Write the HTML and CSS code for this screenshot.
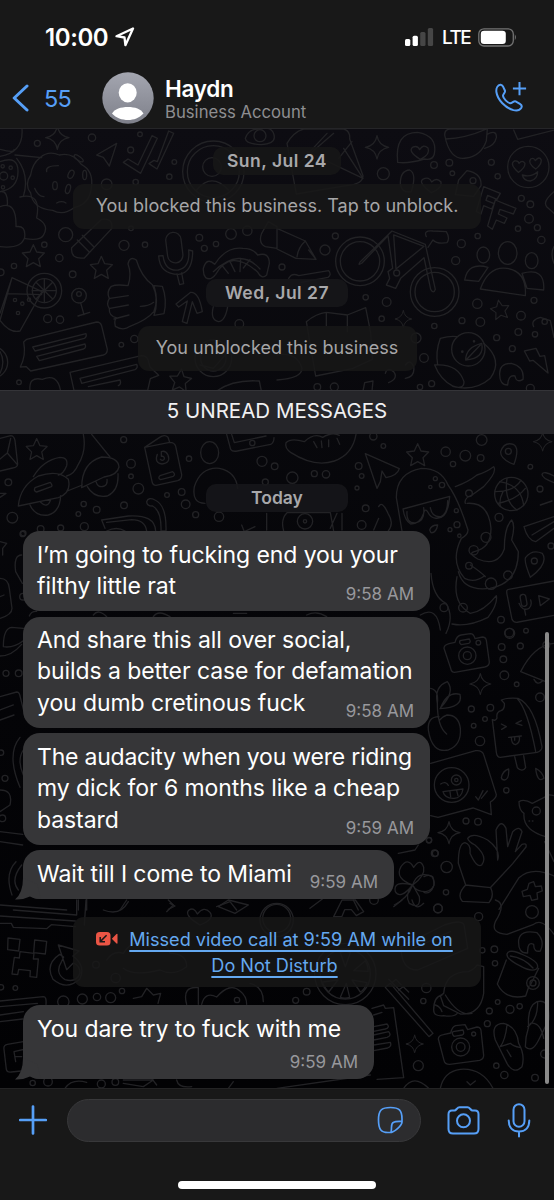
FILE: index.html
```html
<!DOCTYPE html>
<html lang="en">
<head>
<meta charset="utf-8">
<title>Chat</title>
<link rel="stylesheet" href="styles.css">
</head>
<body>
<div class="phone">
  <header class="top">
    <div class="status">
      <span class="clock">10:00</span>
      <svg class="loc" width="20" height="20" viewBox="0 0 20 20"><path d="M18 1.5 1.5 9.2l8 1.3.9 7.7z" fill="none" stroke="#fff" stroke-width="2.3" stroke-linejoin="round"/></svg>
      <svg class="signal" width="29" height="19" viewBox="0 0 29 19"><rect x="0" y="11" width="5.3" height="7" rx="1.5" fill="#fff"/><rect x="7.6" y="7.8" width="5.3" height="10.2" rx="1.5" fill="#fff"/><rect x="15.2" y="4" width="5.3" height="14" rx="1.5" fill="#464646"/><rect x="22.8" y="0" width="5.3" height="18" rx="1.5" fill="#464646"/></svg>
      <span class="net">LTE</span>
      <svg class="battery" width="40" height="19" viewBox="0 0 40 19"><rect x=".8" y=".8" width="34.5" height="17.2" rx="5.2" fill="none" stroke="#737373" stroke-width="1.3"/><rect x="2.8" y="2.8" width="25" height="13.2" rx="3.3" fill="#fff"/><path d="M36.8 6.3q2.200 3 0 6z" fill="#737373"/></svg>
    </div>
    <div class="nav">
      <svg class="back" width="18" height="28" viewBox="0 0 18 28"><path d="M15 2 2.2 14 15 26" fill="none" stroke="#569ff7" stroke-width="3" stroke-linecap="round" stroke-linejoin="round"/></svg>
      <span class="count">55</span>
      <svg class="avatar" width="52" height="52" viewBox="0 0 52 52"><defs><linearGradient id="av" x2="0" y2="1"><stop stop-color="#a4a6b0"/><stop offset="1" stop-color="#7e808a"/></linearGradient></defs><circle cx="26" cy="26" r="25.700" fill="url(#av)"/><ellipse cx="25.700" cy="20.800" rx="9" ry="9.600" fill="#fff"/><path d="M10 41.500c2.500-4.500 9-6.500 16-6.500s13 2 15.500 6.500C37 46 32 48 26 48s-12-2-16-6.500z" fill="#fff"/></svg>
      <div class="who"><div class="name">Haydn</div><div class="sub">Business Account</div></div>
      <svg class="call" width="33" height="33" viewBox="0 0 33 33"><g fill="none" stroke="#569ff7" stroke-width="2"><path d="M25.500 1v13.200M18.900 7.600h13.200"/><path stroke-linejoin="round" d="M2.400 11c-.5-4 1.500-6.800 4-7.200 1.300-.2 2.100.7 2.800 2l1.700 3.700c.9 2-2 3.300-1.900 5.400.2 2.600 4.500 7 7.200 7.300 2.100.1 3.500-2.600 5.400-1.800l4.300 2.400c2.200 1.300 2.300 2.500 1.300 4.200-1.500 2.300-4.300 3-7.800 2.100C11.600 26.900 3.500 19 2.400 11z"/></g></svg>
    </div>
  </header>

  <main class="chat">
    <svg class="wallpaper" width="554" height="959" viewBox="0 129 554 959" preserveAspectRatio="none">
      <defs>
        <path id="star" d="M0-33 10-11 33-8 16 9 21 33 0 21-21 33-16 9-33-8-10-11z"/>
        <path id="spark" d="M0-35Q5-5 35 0Q5 5 0 35Q-5 5-35 0Q-5-5 0-35z"/>
      </defs>
      <g class="doodle">
        <g transform="translate(0 125) scale(.33333)">
          <use href="#spark" x="172" y="38"/><circle cx="276" cy="38" r="11"/><circle cx="112" cy="55" r="9"/><circle cx="420" cy="28" r="7"/><circle cx="392" cy="75" r="9"/><circle cx="523" cy="111" r="7"/><circle cx="508" cy="155" r="8"/><circle cx="407" cy="171" r="8"/><circle cx="320" cy="178" r="16"/>
          <path d="M66 12q5 70-66 82M0 73q45 12 42 0M0 110q55-20 54 30 0 50-54 60M45 90l80 8M50 100q40 50 20 115"/>
          <circle cx="11" cy="153" r="12"/><circle cx="8" cy="124" r="5"/><circle cx="32" cy="128" r="5"/><circle cx="38" cy="158" r="5"/><circle cx="9" cy="187" r="5"/>
          <path d="M0 245q50-20 48 60 30-5 26 32-10 35-74 28M60 216q65-15 50 63 40 20 20 52-10 17-54 10M0 200q25-5 22 42"/>
          <path d="M120 98q25-22 58-8 40-10 66 28 38 20 30 70-5 50-52 60-32 25-64 8-60-5-66-52-20-25 0-54 5-35 28-52z"/>
          <path d="M140 140q-5-18 35-18M104 190q10 25 28 25M170 234q15-8 28 0"/><ellipse cx="213" cy="148" rx="8" ry="13" transform="rotate(25 213 148)"/><ellipse cx="165" cy="182" rx="7" ry="12"/><ellipse cx="204" cy="192" rx="7" ry="14" transform="rotate(15 204 192)"/><ellipse cx="254" cy="150" rx="6" ry="14"/><ellipse cx="236" cy="100" rx="16" ry="6" transform="rotate(35 236 100)"/>
          <path d="M290 90l60-35-22 68-18-26z"/><path d="M370 112l14-10 30 18 42-88 16 8-50 105zM447 116l15-10 10 4 34-92 15 7-50 107z"/>
          <circle cx="640" cy="140" r="92"/><circle cx="640" cy="140" r="78"/><circle cx="636" cy="126" r="28"/><path d="M590 195q45-55 95 0"/><path d="M736 40q10-30 45-28 40-10 42 25 0 20-40 22-45-2-47-19z"/><circle cx="780" cy="32" r="18"/>
          <path d="M215 368l90-85q35-5 30 28l-82 88q-42 5-38-31zM232 345l35 35M247 331l35 35"/>
          <circle cx="197" cy="329" r="21"/><circle cx="372" cy="361" r="15"/><circle cx="435" cy="359" r="8"/><circle cx="133" cy="359" r="8"/><circle cx="178" cy="399" r="11"/><circle cx="218" cy="448" r="10"/><circle cx="42" cy="423" r="8"/><circle cx="2" cy="442" r="10"/><circle cx="598" cy="338" r="10"/><circle cx="613" cy="370" r="9"/><circle cx="648" cy="357" r="8"/><circle cx="693" cy="327" r="16"/><circle cx="742" cy="317" r="14"/><circle cx="393" cy="310" r="7"/>
          <use href="#star" x="100" y="392"/><use href="#star" x="304" y="427"/>
          <rect x="500" y="322" width="46" height="92" rx="23" transform="rotate(-7 523 368)"/><path d="M476 393q3 55 60 55 42-5 42-70l-12-3q5 53-31 60-40 5-46-43zM531 447l8 32 12-3-6-32"/>
          <path d="M610 430q10-35 34-12 35-55 85-48 30 0 44 20 35-10 35 25l-8 35q-15 15-28-10-80-70-125 8-15 20-30 10-8-10-7-28zM640 440q80-75 140-8M665 420l20 25M690 410l15 30M722 400l-2 40M750 404l-20 25"/>
          <path d="M36 458l90 42-66 118q-30 8-60-32zM20 506l105 3M0 565l36-107"/><circle cx="133" cy="497" r="52"/><circle cx="133" cy="497" r="36"/><path d="M133 461v72M97 497h72M108 472l50 50M158 472l-50 50"/><circle cx="45" cy="525" r="5"/><circle cx="67" cy="536" r="5"/><circle cx="87" cy="524" r="5"/><circle cx="54" cy="564" r="5"/>
          <circle cx="237" cy="512" r="22"/><circle cx="237" cy="507" r="7"/><path d="M242 534l10 35M234 573l35-11"/><circle cx="143" cy="581" r="12"/><circle cx="180" cy="584" r="11"/>
          <path d="M384 482q12-35 0-65 5-25 25-12 15 50 48 74 20 40 5 80-20 25-72 45-20 15-44 0-5-20 5-25-25-5-23-28-10-15 0-30-10-20 6-37 15-7 50-2zM330 520l55-8M330 550l55-10M342 582l45-12M421 544q25 0 40-12M462 482l25 2q15 40 5 82l-30 5q15-40 0-89z"/>
          <path d="M528 537l44-35q25-2 35 58l-16 5-14-35-16 65-14-5 15-62-26 18zM640 545q-10 40 15 45 20 0 28-45"/><circle cx="718" cy="597" r="13"/><circle cx="403" cy="642" r="11"/><circle cx="364" cy="659" r="7"/><circle cx="57" cy="772" r="7"/>
          <path d="M80 643l210-52q12 0 15 12l17 70q0 14-12 17L92 738l-13-13-18 1q18-35 10-75zM98 666l160-40q3 10-5 14l-148 38zM110 694l145-37q5 12-5 15l-132 35z"/>
          <path d="M210 742l214-50q15 0 20 12l6 22 26 25-25 10-8 35H222zM240 760l170-42q5 10-5 16l-160 41zM265 785l95-20q5 12-5 17M90 798q-5-45 37-35 45-20 55 35"/><circle cx="-25" cy="712" r="48"/><path d="M0 680q17 30 0 65"/>
          <use href="#star" x="541" y="765" transform="rotate(6 541 765)"/><circle cx="640" cy="700" r="55"/><circle cx="640" cy="700" r="38"/><path d="M600 720l40 10 40-45M650 798q50-35 128-30l6 30M785 325l20-35 26 15v65l-35-5q-22-10-11-40"/>
        </g>
        <g transform="translate(277 125) scale(.33333)">
          <path d="M30 55q20-35 50-43h120q20 5 18 30l40 110q0 25-50 30l-150 25zM60 120L170 25M200 70L258 160 90 80M80 100l70-75M225 50l-40 50"/><use href="#spark" x="300" y="67"/><circle cx="319" cy="146" r="18"/><path d="M362 112q-10-90 60-90 60 10 50 65-5 20-30 15-50 15-80 10zM430 103q-40-25-22-37 15-5 20 8 10-18 25-5 8 20-23 34z"/>
          <path d="M503 30q0-18 18-18h110l-3 35q-15 45-60 52-50 10-65-69zM506 42q60-2 123-30M630 28q30-15 28 10-5 25-35 32M710 15l12 28 110-28"/><circle cx="754" cy="126" r="62"/><path d="M724 142q-28-25-12-34 12-2 14 7 10-12 18 0 0 15-20 27zM776 132q-25-18-15-30 10-5 14 5 12-15 18-2 0 15-17 27zM736 150q25 8 46-10 0 22-22 28-20 0-24-18z"/>
          <circle cx="471" cy="120" r="10"/><circle cx="517" cy="113" r="10"/><circle cx="526" cy="145" r="7"/><circle cx="643" cy="112" r="9"/><circle cx="662" cy="154" r="8"/><path d="M370 175q0-38 28-40 22 10 5 65-30 5-33-25zM463 203q-40-30-26-40 20-10 27 8 15-15 28 0 5 18-29 32z"/><path d="M545 165l25-28q45 8 42 45l-22 32-55-5zM620 185l50 20-10 18-28-12-5 15 25 10-8 16-24-10-8 25-14-8zM655 225l62 25-8 17-40-14-5 14 26 12-8 16-24-10-12 28-14-10z"/><circle cx="588" cy="167" r="9"/>
          <circle cx="733" cy="220" r="9"/><circle cx="760" cy="238" r="10"/><circle cx="756" cy="281" r="13"/><circle cx="723" cy="311" r="8"/><circle cx="781" cy="308" r="9"/><circle cx="793" cy="345" r="11"/><circle cx="602" cy="333" r="8"/><circle cx="553" cy="356" r="12"/><circle cx="536" cy="407" r="12"/><circle cx="175" cy="333" r="9"/><circle cx="144" cy="375" r="15"/><circle cx="15" cy="426" r="9"/>
          <path d="M831 200q-35 30-22 45l22 20M831 365q-12 20 0 50"/><path d="M0 310l85 38 32 55-60-3L0 372M85 348q-22 20-25 48M117 403l-22-28"/>
          <circle cx="249" cy="409" r="73"/><circle cx="249" cy="409" r="59"/><circle cx="473" cy="501" r="73"/><circle cx="473" cy="501" r="59"/><path d="M250 410l95-92 100 40 30 135q-5 15-14 0l-20-95-70 62-15 30-28-10 10-20-5-20 14-10-14-98-78 82q-15 10-5-4zM350 330l7 102 84-68zM448 335q-10-20 20-17l40 2q12 20 2 33-30 5-42-8l-15 22"/><circle cx="359" cy="444" r="9"/>
          <ellipse cx="692" cy="384" rx="28" ry="34"/><ellipse cx="619" cy="390" rx="19" ry="24"/><ellipse cx="764" cy="407" rx="19" ry="24"/><path d="M610 492q25-70 80-62 60 10 55 82zM563 465q10-55 70-38l-28 42zM735 445q70-20 65 50l-50-5z"/><path d="M35 460q10-18 30-8l90-15q10 12-2 20l-80 15"/>
          <use href="#star" transform="translate(669 553) rotate(-10) scale(.85)"/><circle cx="601" cy="536" r="14"/><circle cx="771" cy="526" r="9"/><circle cx="732" cy="572" r="13"/><circle cx="610" cy="591" r="13"/><circle cx="555" cy="587" r="9"/><circle cx="472" cy="603" r="8"/><circle cx="724" cy="621" r="10"/><circle cx="659" cy="638" r="9"/><circle cx="706" cy="671" r="9"/><circle cx="441" cy="699" r="13"/><circle cx="329" cy="531" r="13"/><circle cx="266" cy="517" r="8"/><circle cx="314" cy="581" r="8"/><circle cx="417" cy="639" r="15"/><circle cx="464" cy="776" r="9"/><circle cx="429" cy="786" r="8"/><circle cx="172" cy="786" r="12"/><circle cx="121" cy="786" r="10"/>
          <use href="#spark" transform="translate(379 582) scale(.72)"/><path d="M88 590q30-25 60-28l63 8 55-22 15 75 5 80-60 28-110 22zM148 562v40M211 570v50"/>
          <circle cx="574" cy="673" r="50"/><path d="M490 640q30-8 50-5M490 640q-15 40-8 80M620 655q60 50 20 105-45 40-110 25-40-20-57-65 70-5 88 50 0 25-35 13M566 705q0-38 48-50 10 45-48 50zM570 702l40-42"/><circle cx="591" cy="649" r="2"/><circle cx="556" cy="680" r="2"/>
          <path d="M742 678l35-8 12 24 14-2 10 52-45-38-10 2zM770 605q-10-20 20-28l30 10 11 50M668 745q0-30 35-30 40 10 35 48-20 12-24-10-20-5-22 27-25 0-24-35zM325 745q5-20 25-5 15 20-15 33M385 720q15-20 25 5 5 30-25 35M258 798l5-25 25-5-3 30M0 690q60-10 75 40 0 30-75 35"/><circle cx="760" cy="790" r="12"/><circle cx="803" cy="590" r="8"/><circle cx="774" cy="628" r="8"/>
        </g>
        <g transform="translate(0 385) scale(.33333)">
          <use href="#star" transform="translate(110 192) scale(.95)"/><path d="M0 160l32-8q10 0 13 15l8 70q0 10-15 12L0 258M0 222l22-18 30 35M32 160L22 204M250 148q10 50-15 90-12 30-35 35M275 148l55 68"/>
          <path d="M55 363q5-60 60-90 60-20 90 10 10 40-30 55zM100 275q30-50 80-58 25 0 20 25-10 25-25 28M105 308l46-16q8 10 3 13l-44 16q-10-2-5-13zM90 360q15 35 55 30 35-10 37-58M122 352q20 20 30-8M202 318l45-18M245 308q0-75 60-92 50 0 52 30-5 25-45 30zM262 305q20 35 60 28 35-15 32-67M288 290q5 20 25 13 10-5 8-20"/>
          <circle cx="371" cy="164" r="9"/><circle cx="393" cy="236" r="13"/><circle cx="393" cy="274" r="7"/><circle cx="415" cy="311" r="16"/><circle cx="25" cy="292" r="10"/><circle cx="37" cy="398" r="16"/><circle cx="251" cy="357" r="8"/><circle cx="235" cy="387" r="7"/><circle cx="290" cy="374" r="10"/><circle cx="372" cy="361" r="10"/><circle cx="253" cy="425" r="12"/><circle cx="182" cy="429" r="9"/><circle cx="122" cy="432" r="10"/><circle cx="70" cy="445" r="8"/><circle cx="501" cy="330" r="7"/><circle cx="545" cy="321" r="10"/><circle cx="557" cy="358" r="13"/><circle cx="587" cy="389" r="9"/><circle cx="657" cy="395" r="14"/><circle cx="567" cy="221" r="8"/><circle cx="786" cy="229" r="15"/><circle cx="824" cy="244" r="10"/><circle cx="796" cy="291" r="9"/>
          <path d="M434 187l45-30q15-10 25 0l5 15M434 187l75-15q15 0 18 12l18 85q0 14-12 18l-65 14q-10 0-12-12zM480 272l38-12q10 8 2 14l-38 10q-10-5-2-12z"/><path d="M472 208q-10 25 14 29 27-3 18-27-8-15-20-10v14q10-2 9 8-5 8-12 1"/><ellipse cx="629" cy="203" rx="27" ry="33"/><path d="M615 355q-40 0-32-50 20-60 75-55 50 10 55 60M680 148l12 45q5 8 20 5l100-20q10-5 10-20M695 148l8 25 95-20"/><circle cx="757" cy="174" r="8"/>
          <path d="M440 350q5-15 25-5 35 15 33 93h-15q2-60-25-75-18 0-18-13zM305 405l80-12q80-5 82 45M305 405l10 25M320 412l75-8q40 0 45 34M320 438q30-15 55 0M725 420l8 20 32-15M800 385v50M0 325h18l-18 12"/>
        </g>
        <g transform="translate(277 385) scale(.33333)">
          <path d="M237 148q-10 60-65 80-60 20-130-25-20-15-15-30 15-15 55-3 30-28 55-13 30-18 50-6M110 170l10 18M133 168l2 20M155 165v20M180 160l8 18"/><path d="M265 206l102 45q-5 20-40 27l-12-20-5 32-10 20z"/><use href="#star" x="422" y="209"/><circle cx="506" cy="200" r="14"/><circle cx="565" cy="212" r="16"/><circle cx="611" cy="219" r="10"/><circle cx="528" cy="237" r="8"/><circle cx="614" cy="165" r="16"/><circle cx="289" cy="154" r="11"/><circle cx="319" cy="183" r="7"/><circle cx="245" cy="243" r="10"/><circle cx="254" cy="273" r="7"/><circle cx="240" cy="309" r="6"/><circle cx="46" cy="278" r="17"/><circle cx="112" cy="266" r="9"/><circle cx="147" cy="268" r="11"/><circle cx="760" cy="245" r="7"/><circle cx="789" cy="312" r="9"/><circle cx="266" cy="370" r="10"/><circle cx="254" cy="420" r="13"/><circle cx="666" cy="397" r="12"/><circle cx="822" cy="483" r="9"/><circle cx="672" cy="704" r="10"/><circle cx="697" cy="743" r="13"/>
          <path d="M711 238q-42-15-40-38 10-30 38-22 20 10 2 60z"/><circle cx="694" cy="199" r="9"/><use href="#spark" transform="translate(797 170) scale(.8)"/><circle cx="703" cy="327" r="50"/><path d="M668 290q65 10 72 72M655 320q55 0 77-34M662 355q55-10 83-45M690 280q-10 70 30 95M670 365q-5-20 8-45"/>
          <path d="M375 438q-10-60-17-100 0-75 75-88 60 0 80 50 30 40 60 135 0 15-20 25-35 70 10 120 30 15 60-8M378 372l140-38q-5 65-35 65-20 5-32-20-8-10-12 8-10 30-38 30-18-10-23-45zM390 380q-3 35 25 34 30-5 25-46M460 368q5 30 32 27 20-10 20-48M535 305q40-15 65-35 30-10 50-25 12 15-30 60l-35 25q-25 10-20 25M570 355q65-5 72 75 0 60-50 70-20 5 10 22 60 25 80-30 0-65 22-87 12 15 0 60l20 35q0 95-85 110-80 10-95-50M580 540q30 20 45 35M540 575q-15 80 40 110 40-5 78-53 5 25-25 65-60 30-108 20M462 565q5 70 45 90 25 40 0 90M430 690q50-30 60 45"/>
          <circle cx="475" cy="281" r="6"/><circle cx="495" cy="300" r="8"/><circle cx="460" cy="306" r="5"/><circle cx="538" cy="377" r="6"/><circle cx="540" cy="419" r="9"/><circle cx="519" cy="434" r="6"/><circle cx="547" cy="452" r="5"/><circle cx="576" cy="325" r="10"/><circle cx="627" cy="457" r="15"/><circle cx="590" cy="496" r="14"/><circle cx="576" cy="542" r="10"/><circle cx="642" cy="596" r="17"/><circle cx="693" cy="571" r="13"/><circle cx="558" cy="668" r="13"/><circle cx="501" cy="668" r="12"/><path d="M458 435q5-15 24-15-5 25-20 23zM305 365q10-20 28 20 20 30 0 54M290 435l15-35M20 438q-10-35 10-55h130l10 55M180 385l-20 45M195 385v50"/><circle cx="84" cy="409" r="23"/><circle cx="84" cy="409" r="5"/>
          <path d="M831 395l-90 30q10 40 35 45l55-40M790 360l35-12M765 450l66-40M795 268q5-12 36 5M795 268q0 12 36 25M760 577q-20-50-14-60 20-25 50-12 20 30-36 72z"/><circle cx="772" cy="528" r="9"/><path d="M695 613l136-25M695 613q-8 0-5 15l15 75q5 12 20 8l106-20M726 655q10 25 30 15 10-10 5-25M743 675l3 15M785 632l5 30 27-20z"/><rect x="731" y="628" width="17" height="36" rx="8" transform="rotate(-10 740 645)"/>
        </g>
        <g transform="translate(0 530) scale(.33333)">
          <path d="M0 35l20 5-12 15 0 20M65 75q-25 0-18 50l20 35M0 145q25 0 28 30l8 60q0 20-36 30M0 200l12-5M10 350q0-55 25-58l35 3M10 350q30 5 60-18M0 378q35 0 65-35M0 500l50-14q8 0 10 12l10 40M0 540l40-15M0 570l42-15"/><circle cx="18" cy="430" r="9"/><circle cx="56" cy="430" r="10"/><circle cx="68" cy="12" r="8"/><circle cx="69" cy="200" r="10"/><path d="M88 258q5-15 22-14M280 255q15-20 40 5M460 260q15-22 50 0M700 250h40M920 255q30-15 60 5"/>
        </g>
        <g transform="translate(0 730) scale(.33333)">
          <path d="M60 22q-42 50 0 150M70 60q-20 30 0 75M0 180q40 0 30 45l-30 20M0 305l68 8M0 335l68 10M48 395q-35 35-12 100M65 405q-35 45-10 75M0 525l200 15M235 540v-30M260 540v-32M380 510l-20 30M510 520l15 8-20 10"/><circle cx="15" cy="145" r="9"/><circle cx="7" cy="265" r="10"/><circle cx="3" cy="68" r="8"/>
          <path d="M1238 465q-55-20-35-55 20-30 38 2 20-30 30 0 5 25-33 53zM1238 465q15-45 60-25 15 35-20 45-30 0-40-20zM1238 465q-60-15-52 20 15 25 52-20zM1238 465q-25 30-10 55 35 20 30-20zM1238 465q-15 40-55 60"/><circle cx="1287" cy="330" r="8"/><circle cx="1304" cy="370" r="10"/><circle cx="830" cy="565" r="42"/><path d="M650 530l40-15 20 25M930 535l40-30M1060 510l15 30M1195 370l50-10 10-15"/>
        </g>
        <g transform="translate(0 900) scale(.33333)">
          <path d="M0 70h34l6 12 100 4 14-12 72 6M0 48l226 15M230 0v45L40 30M258 0l-5 75M24 114l36 4-4 35-33-4zM104 120l36 4-4 38-35-4zM60 155l42 5-2 17h15l-5 55-20-2 1-18-35-4-3 16-17-2 7-50 15 2z"/><path d="M175 135l62 18-18 15q40 30 20 70-40 35-80 0-25-45 20-75l12 8-6 13q-22 35 10 55 35 10 45-20 0-22-20-30l-20 20zM0 303l130-13q10 0 8 23M0 320l112-10M0 345l70-10M0 365l68-8M70 425l-48 8q-12 2-10 15l7 60q2 10 15 8l30-3M42 455l35-8M42 455l5 30M45 470h20"/>
          <circle cx="190" cy="305" r="17"/><circle cx="247" cy="297" r="15"/><circle cx="291" cy="291" r="11"/><circle cx="332" cy="293" r="15"/><circle cx="366" cy="273" r="8"/><circle cx="46" cy="264" r="7"/><circle cx="3" cy="262" r="8"/><circle cx="288" cy="194" r="10"/><circle cx="347" cy="234" r="14"/><circle cx="98" cy="549" r="8"/><circle cx="144" cy="545" r="13"/><circle cx="304" cy="552" r="12"/><circle cx="346" cy="546" r="10"/>
          <path d="M310 30q50 20 75-25M505 0l15 15-20 20M600 75q-50-30-33-45 15-10 25 12 20-25 38-5 15 20-30 38zM655 20l30-20 60 15-40 25zM320 180q20-30 50-20 30-50 75-20 50-30 65 20 50 0 50 40-40 30-80 10-80 20-110-5M400 295l25-5 15-25 20 20 22-5-8 30M560 313q-15-55 35-50v50M605 313q10-40 45-22 40-45 70-18 20 15 20 40M750 250q40 10 40 55M470 555l-15-20M370 540h90l-30 20-60-10M530 540q5 25 45 20M700 545l-15 20M195 565q20-30 65-18"/><circle cx="711" cy="300" r="8"/><circle cx="830" cy="60" r="50"/>
        </g>
        <g transform="translate(277 900) scale(.33333)">
          <path d="M170 50l25-50h40l25 35-22 12-15-18h-20l-8 20zM350 20l25-20M405 0q10 35 35 10"/><circle cx="483" cy="26" r="13"/><circle cx="605" cy="50" r="12"/><circle cx="765" cy="36" r="19"/><circle cx="291" cy="0" r="13"/><circle cx="205" cy="222" r="92"/><circle cx="205" cy="222" r="75"/><path d="M205 200l-15-42q15-10 30 0zM230 212l35-30q10 20 8 32zM225 240l45 8q-8 22-20 28zM208 250l10 42q-15 5-28 0zM183 240l-28 36q-18-20-18-30zM180 215l-44 2q5-25 14-32z"/>
          <path d="M372 140l130-65q60-20 60 5l10 65-150 65q-50 0-50-70zM400 150l120-55M655 0q35 10 0 65-15 35 35 38l80-30q25-20 61 30M725 120q5-32 55-22 25 25 10 55-20 5-20-20-20-10-18 26-30 2-27-39z"/>
          <path d="M690 162q5-18 50 3 55 25 38 42-15 10-50-10-40-20-38-35zM688 180l-27 72q25 50 85 36l10-30M785 205l-25 50M700 168q40 5 68 36"/><circle cx="768" cy="249" r="19"/><circle cx="768" cy="249" r="9"/>
          <path d="M500 280q5-65 75-65 20-10 25-20l20 5v80q-10 65-70 62l-50-25-10-30zM505 285q40 65 80 55M495 285q-25 5-25 45 0 20 30 17 30 5 40-6M475 315q15 5 20 20"/><path d="M325 262l15-12 128 150-12 10zM335 238l60 60M345 248l12-10 15 16M365 270l14-10 16 16"/>
          <path d="M285 325l35-10 5 10 25-2 30 210-80 5M290 345l25-8M290 380l40-8q10 10-5 15l-35 7M290 405l45-10q10 12-5 17l-40 8M290 435l50-8q5 12-8 17l-42 8M0 565l280-40"/><use href="#spark" transform="translate(413 432) scale(.75)"/><circle cx="424" cy="497" r="15"/><circle cx="448" cy="264" r="14"/><circle cx="439" cy="303" r="8"/><circle cx="89" cy="275" r="10"/><circle cx="56" cy="301" r="9"/><circle cx="652" cy="148" r="10"/><circle cx="654" cy="190" r="8"/><circle cx="616" cy="151" r="8"/><circle cx="637" cy="333" r="9"/><circle cx="662" cy="306" r="7"/><circle cx="699" cy="328" r="12"/><circle cx="728" cy="319" r="8"/><circle cx="631" cy="371" r="9"/><circle cx="658" cy="497" r="8"/><circle cx="682" cy="525" r="11"/><circle cx="774" cy="533" r="10"/><circle cx="803" cy="462" r="12"/>
          <path d="M484 417q0-10 15-13l22-5q5-20 15-22l28-3 8 15 28-8q10 0 12 10l8 75q0 12-12 15l-90 12q-15 0-17-12zM528 395l30-5q5 12-2 15l-25 4q-8-8-3-14z"/><circle cx="551" cy="441" r="27"/><circle cx="551" cy="441" r="13"/><circle cx="590" cy="402" r="6"/><path d="M655 420q-15-50 25-50 40 10 45 60 20 35 10 70-25 25-45-10zM670 440q15-20 20-65M670 440l30-10q10 10 28 12M690 450l12 20M745 440q0-30 10-60-5-60 25-75 40-10 35 55l-30 60q-20 40-40 20zM752 380q30-20 30-75M760 370q30-5 40 45M490 565q10-50 60-57 65-5 98 57M570 545l10 10 15-12M380 565q30-45 75 0"/>
        </g>
        <g transform="translate(424 620) scale(.33333)">
          <path d="M60 85q0-10 15-14l18-4q5-20 18-22l28-4q10 0 14 15l22-5q10 0 12 10l9 65q0 12-14 15l-90 16q-10 0-12-12zM108 62l28-5q6 10-2 13l-22 4q-8-5-4-12z"/><circle cx="130" cy="107" r="26"/><circle cx="130" cy="107" r="12"/><circle cx="163" cy="68" r="7"/><use href="#spark" transform="translate(169 192) scale(.9)"/>
          <circle cx="257" cy="40" r="15"/><circle cx="306" cy="32" r="7"/><circle cx="233" cy="81" r="10"/><circle cx="289" cy="78" r="9"/><circle cx="238" cy="118" r="10"/><circle cx="241" cy="166" r="13"/><circle cx="278" cy="193" r="7"/><circle cx="199" cy="263" r="10"/><circle cx="142" cy="267" r="9"/><circle cx="183" cy="297" r="7"/><circle cx="149" cy="317" r="7"/><circle cx="168" cy="363" r="14"/><circle cx="348" cy="232" r="13"/><circle cx="247" cy="511" r="8"/><circle cx="126" cy="603" r="9"/><circle cx="162" cy="605" r="10"/><circle cx="68" cy="741" r="17"/><circle cx="34" cy="700" r="9"/><circle cx="66" cy="817" r="8"/><circle cx="15" cy="661" r="8"/>
          <path d="M20 205q25 5 20 45-10-50 30-65 25 30-20 78 20-50 58-40 10 40-60 43M40 250q0 70 28 92M45 290q-35 0-32 40 10 70 60 60 40-15 36-65-5-40-40-40-15 5-22 15"/>
          <path d="M232 240q20-8 50-5 50 20 72 145 0 12-15 17l-110 15q-10 0-12-15l-12-98q10 5 14-5-3-18 12-22 12-5 10-22zM280 236q30 30 55 158M272 410l8 33q15 15 25 0l-6-36M232 312l15 8-14 8M292 302l-16 8 18 6M254 352l38-4M262 352q0 20 12 22 15-5 12-24M272 351v10"/>
          <path d="M20 430l135-38q20-2 24 12l38 120q0 10-18 22l3 38-55-20-105 28-22-5"/><circle cx="83" cy="495" r="52"/><circle cx="97" cy="480" r="15"/><circle cx="97" cy="480" r="5"/><path d="M50 492q15-10 23 4M57 515l60-8q-5 30-30 28-25 0-30-20zM78 515l2 15M98 512l4 15M155 530l8 10 14-28M172 535l18-22"/><use href="#spark" transform="translate(75 638) scale(.95)"/>
          <path d="M232 472q5-20 22-25 2 30-12 33-10 0-10-8zM335 445q20 10 25 30-20 15-25-30zM285 545q15-10 40 5l40-20M285 545q0 25 15 35-5 50 65 70M362 665l28 60M372 535q-10-15 18-8M315 603h2M325 603h2M290 155q40-80 100-85M290 155l75 30M330 178q10 20 25 5"/><circle cx="337" cy="573" r="12"/>
          <path d="M125 795l-22-65q0-60 20-62 18 5 15 32 20 45 35 35 20-25-20-60-20-10-22-20 15-20 60 5 40 30 30 60l-5-90q15-35 30-5l5 55 15-45q20-20 28 0l-20 60 20-22q15-5 12 8l-40 50-65 70M125 795l75 8q12 25-5 45l-80-4q-18-20 10-49zM225 868l60-95q40-35 105-5M315 790l14-5 5 15 18-2 3 15-16 6 2 18-18 4-5-15-20 4-4-16 16-6zM0 770q30-15 30 25-10 30-30 22"/><circle cx="42" cy="865" r="13"/><circle cx="367" cy="75" r="10"/>
        </g>
      </g>
    </svg>

    <div class="date d1"><span>Sun, Jul 24</span></div>
    <div class="notice n1"><span>You blocked this business. Tap to unblock.</span></div>
    <div class="date d2"><span>Wed, Jul 27</span></div>
    <div class="notice n2"><span>You unblocked this business</span></div>
    <div class="unread"><span>5 UNREAD MESSAGES</span></div>
    <div class="date d3"><span>Today</span></div>

    <div class="bubble"><p>I’m going to fucking end you your<br>filthy little rat</p><time>9:58 AM</time></div>
    <div class="bubble"><p>And share this all over social,<br>builds a better case for defamation<br>you dumb cretinous fuck</p><time>9:58 AM</time></div>
    <div class="bubble"><p><span class="tight">The audacity when you were riding</span><br>my dick for 6 months like a cheap<br>bastard</p><time>9:59 AM</time></div>
    <div class="bubble short"><svg class="tail" width="26" height="24" viewBox="0 0 26 24"><path d="M8 2Q8 17 0 23.500Q8 24 15 20.500Q19 23 26 23L22 8z" fill="#363638"/></svg><p>Wait till I come to Miami</p><time>9:59 AM</time></div>

    <div class="missed">
      <div><svg class="cam" width="22" height="14" viewBox="0 0 22 14"><rect width="14.500" height="13.500" rx="3.500" fill="#eb5545"/><path d="M15.800 6.700 20.500 2q1-.5 1 .5v8.500q0 1-1 .5z" fill="#eb5545"/><path d="M10.600 3.300 4.500 9.400M4.200 5v4.800H9" fill="none" stroke="#181818" stroke-width="1.500"/></svg><a>Missed video call at 9:59 AM while on</a></div>
      <div><a>Do Not Disturb</a></div>
    </div>

    <div class="bubble last"><svg class="tail" width="26" height="24" viewBox="0 0 26 24"><path d="M8 2Q8 17 0 23.500Q8 24 15 20.500Q19 23 26 23L22 8z" fill="#363638"/></svg><p>You dare try to fuck with me</p><time>9:59 AM</time></div>
    <div class="scroll"></div>
  </main>

  <footer class="bottom">
    <div class="tools">
      <svg class="plus" width="28" height="30" viewBox="0 0 28 30"><path d="M14 1.500v27M1.200 15h25.600" stroke="#569ff7" stroke-width="2.700" stroke-linecap="round"/></svg>
      <div class="field"><svg width="27" height="28" viewBox="0 0 27 28"><path d="M13.500 1.500C4.500 1.500 1.500 4 1.500 14s3 12.500 9.500 12.500h2C17 26.500 25 19.500 25 16v-3C25 4 22 1.500 13.500 1.500zM14 26.300c1.300-4.800-.8-8.600 2.600-10 2.400-1.200 5.500-.7 8.200-1" fill="none" stroke="#569ff7" stroke-width="1.700"/></svg></div>
      <svg class="camera" width="33" height="30" viewBox="0 0 33 30"><g fill="none" stroke="#569ff7" stroke-width="2"><path d="M5 5.500h2.500c2 0 2.500-3.300 5-3.300h8c2.500 0 3 3.300 5 3.300H28c2.200 0 3.500 1.500 3.500 3.800V24c0 3-1.500 4.500-4.500 4.500H6c-3 0-4.500-1.500-4.500-4.500V9.300C1.500 7 2.800 5.500 5 5.500z"/><circle cx="16.500" cy="15.800" r="6.500"/></g></svg>
      <svg class="mic" width="24" height="35" viewBox="0 0 24 35"><g fill="none" stroke="#569ff7" stroke-width="2" stroke-linecap="round"><rect x="6.500" y="1.200" width="11" height="22.500" rx="5.500"/><path d="M1.700 17.500C1.700 25 6 28.500 12 28.500S22.300 25 22.300 17.500M12 28.500v5"/></g></svg>
    </div>
    <div class="home"></div>
  </footer>
</div>
</body>
</html>
```
FILE: styles.css
```css
* { box-sizing: border-box; }
body { margin: 0; background: #181818; font-family: Inter, "Liberation Sans", sans-serif; color: #fff; }
svg { display: block; flex: none; }
.phone { width: 554px; height: 1200px; display: flex; flex-direction: column; overflow: hidden; }

.top { height: 129px; background: #181818; border-bottom: 1px solid #252528; }
.status { height: 72px; padding: 2px 36px 0 45px; display: flex; align-items: center; }
.clock { width: 70px; font-size: 24px; font-weight: 600; letter-spacing: -.4px; white-space: nowrap; }
.signal { margin-left: auto; }
.net { width: 36px; font-size: 19px; font-weight: 500; letter-spacing: -1.5px; margin-left: 8px; padding-top: 1px; }
.nav { height: 52px; padding: 0 27px 0 12px; display: flex; align-items: center; }
.count { width: 58px; margin-left: 14px; font-size: 23.500px; letter-spacing: -.8px; color: #569ff7; }
.who { margin-left: 11px; padding-top: 2px; flex: 1; }
.name { font-size: 22.500px; font-weight: 600; line-height: 25px; letter-spacing: -.3px; }
.sub { margin-top: 1px; font-size: 16.700px; line-height: 21px; color: #8e8e91; white-space: nowrap; }
.call { margin-bottom: 2px; }

.chat { position: relative; height: 959px; display: flex; flex-direction: column; align-items: center; background: linear-gradient(#0d0c12, #08080c 30%, #040407 60%, #020204); }
.wallpaper { position: absolute; inset: 0; }
.doodle { fill: none; stroke: #222225; stroke-width: 4; stroke-linejoin: round; stroke-linecap: round; }
.date, .notice, .unread, .bubble, .missed { position: relative; flex: none; display: flex; justify-content: center; align-items: center; white-space: nowrap; }
.date { width: 142px; height: 28px; padding-bottom: 2px; border-radius: 10px; background: #17171ae0; color: #a8a8ab; font-size: 17.500px; font-weight: 600; letter-spacing: .5px; }
.notice { height: 45px; padding-bottom: 3px; border-radius: 11px; background: #171717d9; color: #a6a6a8; font-size: 18.050px; }
.d1 { width: 128px; margin-top: 18px; background: #171717e0; }
.n1 { width: 408px; margin-top: 9px; }
.d2 { margin-top: 50px; }
.n2 { width: 279px; margin-top: 19px; }
.unread { width: 100%; height: 44px; margin-top: 19px; padding-bottom: 5px; background: #252529; border-top: 1px solid #343438; font-size: 20.500px; color: #f0f0f2; }
.d3 { margin-top: 50px; margin-bottom: 19px; padding-bottom: 1px; letter-spacing: 0; }

.bubble { align-self: flex-start; width: 407px; margin: 0 0 5.300px 23px; padding: 8.500px 14px 9.200px; border-radius: 17px; background: #363638; justify-content: flex-start; align-items: flex-start; }
.bubble p { margin: 0; font-size: 23px; line-height: 31.300px; letter-spacing: -.08px; }
.bubble .tight { letter-spacing: -.22px; }
.bubble time { position: absolute; right: 16px; bottom: 7px; font-size: 17px; line-height: 20px; color: #98989c; }
.bubble.short { width: 371px; height: 49px; margin-bottom: 18px; }
.short p, .last p { position: relative; }
.tail { position: absolute; left: -8px; bottom: -1px; }
.missed { width: 408px; height: 70px; padding-right: 5px; flex-direction: column; border-radius: 11px; background: #171717d9; font-size: 18.100px; line-height: 26px; margin-bottom: 18px; }
.missed div { display: flex; align-items: center; }
.missed a { color: #64a8f0; text-decoration: underline; text-decoration-thickness: 1.500px; text-underline-offset: 4px; text-decoration-skip-ink: none; }
.cam { margin-right: 11px; }
.bubble.last { width: 351px; height: 74px; margin-bottom: 0; }
.scroll { position: absolute; left: 545px; top: 503px; width: 4px; height: 452px; border-radius: 2px; background: #8a8a8a; }

.bottom { height: 112px; background: #181818; border-top: 1px solid #232324; }
.tools { height: 62px; padding: 0 23px 0 19px; display: flex; align-items: center; }
.field { width: 354px; height: 43px; margin: 0 26px 0 20px; padding-right: 16px; border: 1px solid #38383a; border-radius: 22px; background: #2c2c2e; display: flex; align-items: center; justify-content: flex-end; }
.mic { margin-left: auto; }
.home { width: 198px; height: 8px; margin: 30px auto 0; border-radius: 4px; background: #fff; }
```
